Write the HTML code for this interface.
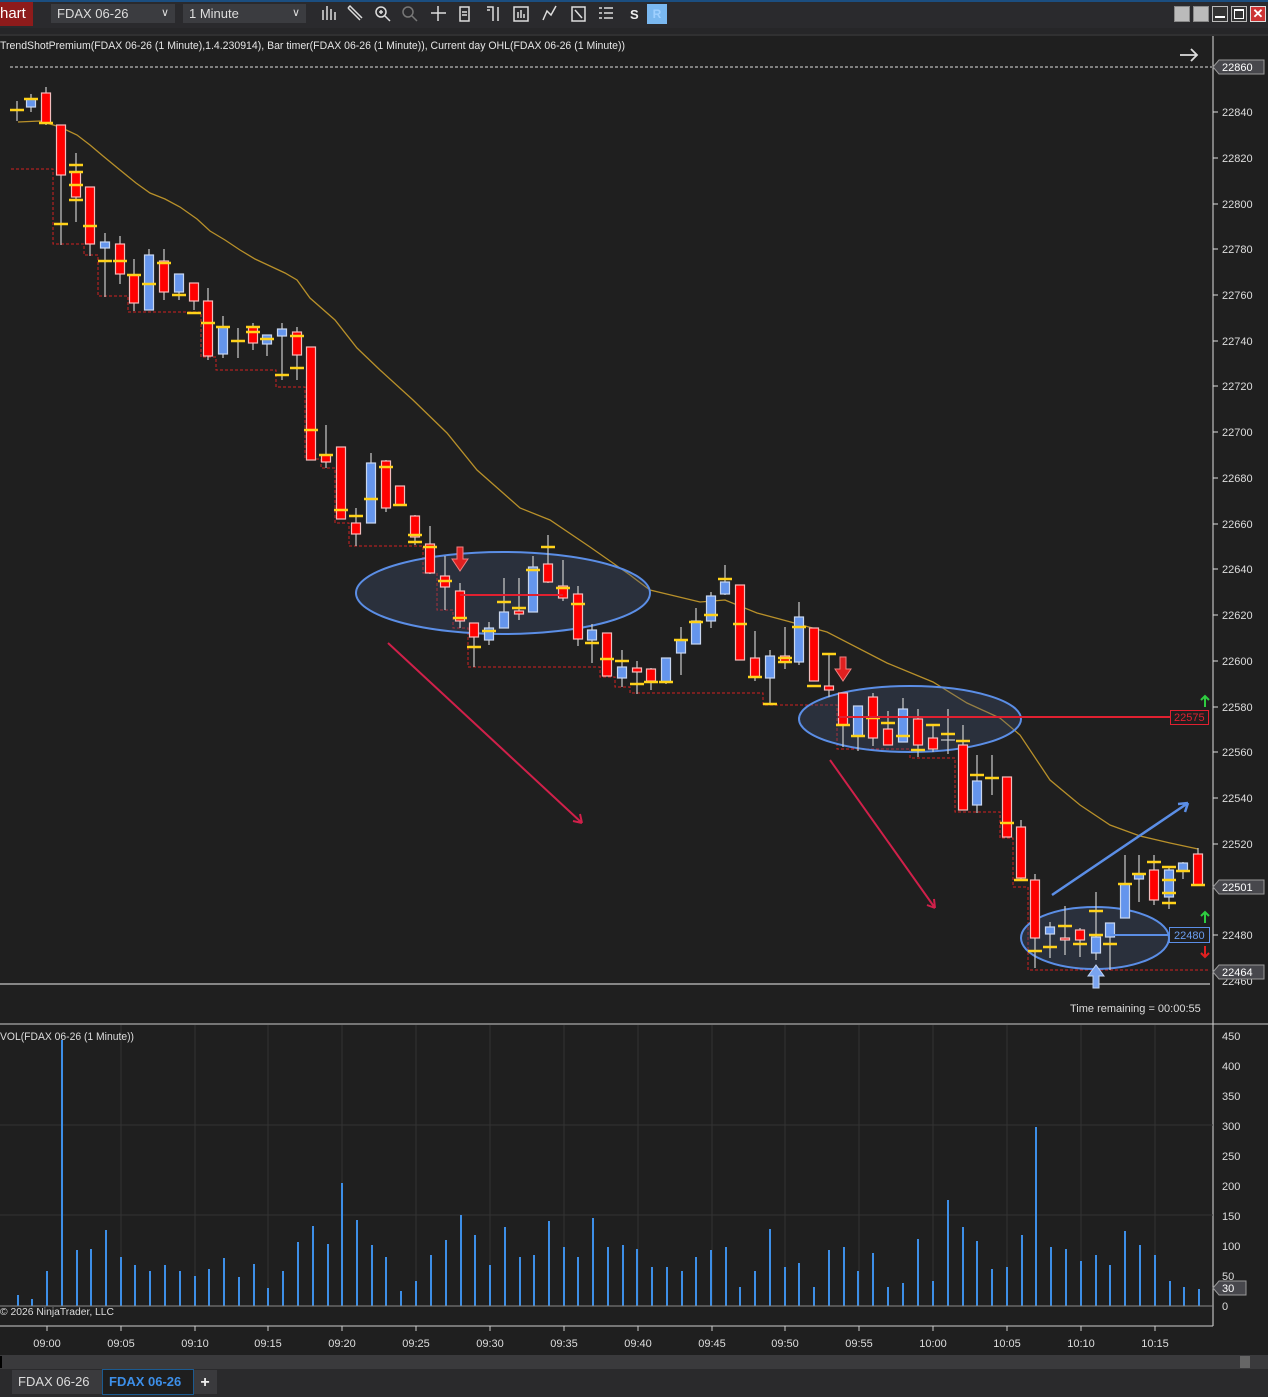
<!DOCTYPE html>
<html><head><meta charset="utf-8"><style>
*{margin:0;padding:0;box-sizing:border-box}
body{width:1268px;height:1397px;background:#1f1f1f;overflow:hidden;font-family:"Liberation Sans",sans-serif;position:relative}
.tb{position:absolute;left:0;top:0;width:1268px;height:28px;background:#2a2a2d;border-top:2px solid #1b4e80}
.abs{position:absolute}
.dd{position:absolute;top:4px;height:19px;background:#3b3c40;color:#ddd;font-size:13px;line-height:19px;padding-left:6px}
.dd span{position:absolute;right:6px;top:0;font-size:11px}
.wb{position:absolute;top:6px;width:16px;height:16px;border:1px solid #888;background:#bbb}
svg text{font-family:"Liberation Sans",sans-serif}
</style></head><body>
<div class="tb"></div>
<div class="abs" style="left:0;top:2px;width:33px;height:24px;background:#8e1b1b;color:#fff;font-size:15px;line-height:24px">hart</div>
<div class="dd" style="left:51px;width:124px">FDAX 06-26<span>&#8744;</span></div>
<div class="dd" style="left:183px;width:123px">1 Minute<span>&#8744;</span></div>
<div class="abs" style="left:630px;top:7px;color:#eee;font-size:13px;font-weight:bold">S</div>
<div class="abs" style="left:647px;top:4px;width:20px;height:20px;background:#7ab8f0;color:#9fd0ff;font-size:12px;text-align:center;line-height:20px;font-weight:bold">R</div>
<div class="wb" style="left:1174px"></div><div class="wb" style="left:1193px"></div>
<div class="wb" style="left:1212px;background:#333;border-color:#bbb"><div style="position:absolute;left:2px;right:2px;bottom:3px;height:2px;background:#fff"></div></div>
<div class="wb" style="left:1231px;background:#333;border-color:#bbb"><div style="position:absolute;left:2px;right:2px;top:2px;bottom:2px;border:1px solid #fff;border-top-width:2px"></div></div>
<div class="wb" style="left:1250px;background:#c33;border-color:#ddd;color:#fff;font-size:13px;line-height:14px;text-align:center;font-weight:bold">✕</div>
<svg class="abs" style="left:0;top:0" width="1268" height="1397">
<g stroke="#ddd" stroke-width="1.5" fill="none">
<path d="M323 10v10M327 6v14M331 9v11M335 12v8"/>
<path d="M348 8l12 12M348 8l2-2 12 12"/>
<circle cx="381" cy="12" r="5"/><path d="M385 16l5 5M379 12h4M381 10v4"/>
<circle cx="408" cy="12" r="5" stroke="#777"/><path d="M412 16l5 5" stroke="#777"/>
<path d="M438 6v15M431 13h15"/>
<path d="M460 7h9v14h-9zM462 12h5M462 15h5"/>
<path d="M487 7h6v14M498 7v14M487 10h3"/>
<path d="M514 7h14v14h-14zM518 12v6M521 10v8M524 14v4"/>
<path d="M543 20l4-9 4 4 5-9"/>
<path d="M572 7h13v14h-13zM575 10l7 8"/>
<path d="M599 8h3M604 8h9M599 13h3M604 13h9M599 18h3M604 18h9"/>
</g>
<rect x="0" y="28" width="1268" height="8" fill="#262628"/>
<line x1="0" y1="35" x2="1268" y2="35" stroke="#3a3a3a"/>
<text x="0" y="49" fill="#e6e6e6" font-size="11" textLength="625" lengthAdjust="spacingAndGlyphs">TrendShotPremium(FDAX 06-26 (1 Minute),1.4.230914), Bar timer(FDAX 06-26 (1 Minute)), Current day OHL(FDAX 06-26 (1 Minute))</text>
<line x1="1213" y1="36" x2="1213" y2="1326" stroke="#ddd"/>
<g fill="#ddd" font-size="11">
<text x="1222" y="116">22840</text><text x="1222" y="162">22820</text><text x="1222" y="208">22800</text><text x="1222" y="253">22780</text><text x="1222" y="299">22760</text><text x="1222" y="345">22740</text><text x="1222" y="390">22720</text><text x="1222" y="436">22700</text><text x="1222" y="482">22680</text><text x="1222" y="528">22660</text><text x="1222" y="573">22640</text><text x="1222" y="619">22620</text><text x="1222" y="665">22600</text><text x="1222" y="711">22580</text><text x="1222" y="756">22560</text><text x="1222" y="802">22540</text><text x="1222" y="848">22520</text><text x="1222" y="939">22480</text><text x="1222" y="985">22460</text>
</g>
<g stroke="#ddd"><path d="M1213 112h5M1213 158h5M1213 204h5M1213 249h5M1213 295h5M1213 341h5M1213 386h5M1213 432h5M1213 478h5M1213 524h5M1213 569h5M1213 615h5M1213 661h5M1213 707h5M1213 752h5M1213 798h5M1213 844h5M1213 935h5"/></g>
<polyline fill="none" stroke="#b8902a" stroke-width="1.3" points="18,122 40,121 60,127 77,135 90,145 103,156 120,170 136,183 150,193 165,199 180,207 197,219 210,231 225,240 240,250 255,259 270,266 285,273 297,280 310,298 335,320 357,348 380,370 413,400 447,433 477,470 520,508 550,520 590,547 630,575 650,590 700,602 725,600 757,613 787,621 827,632 887,663 933,682 967,703 1000,718 1020,735 1050,780 1080,805 1110,825 1140,836 1170,843 1198,849"/>
<polyline fill="none" stroke="#d02020" stroke-width="1" stroke-dasharray="3,2" points="11,169 53,169 53,244 84,244 84,255 98,255 98,296 128,296 128,312 201,312 201,357 216,357 216,370 276,370 276,387 305,387 305,459 321,459 321,468 335,468 335,523 349,523 349,546 423,546 423,573 437,573 437,610 453,610 453,628 468,628 468,667 600,667 600,677 615,677 615,687 630,687 630,693 763,693 763,705 837,705 837,749 910,749 910,758 955,758 955,812 1000,812 1000,838 1013,838 1013,887 1028,887 1028,970 1210,970"/>
<line x1="10" y1="67" x2="1212" y2="67" stroke="#ddd" stroke-dasharray="3,2"/>
<line x1="0" y1="984" x2="1210" y2="984" stroke="#eee"/>
<g fill="rgba(70,90,130,0.3)" stroke="#5b8ee6" stroke-width="2">
<ellipse cx="503" cy="593" rx="147" ry="41"/><ellipse cx="910" cy="719" rx="111" ry="33"/><ellipse cx="1095" cy="938" rx="74" ry="31"/>
</g>
<g stroke-width="1.2">
<g stroke="#ccc">
<path d="M17 101V121M31 94V112M46 87V125M61 125V245M76 153V222M90 187V256M105 233V297M120 236V284M134 259V311M149 249V310M164 249V300M179 274V300M194 283V310M208 288V360M223 316V358M238 328V358M253 323V350M267 335V356M282 323V380M297 327V380M311 347V460M326 425V468M341 447V519M356 508V546M371 453V523M386 460V512M400 486V505M415 515V545M430 526V574M445 556V610M460 583V628M474 623V667M489 622V645M504 578V628M519 578V620M533 556V612M548 535V583M563 560V601M578 586V646M592 624V663M607 633V676M622 650V687M637 661V694M651 668V690M666 658V684M681 627V675M696 608V644M711 592V628M725 565V595M740 585V660M755 631V681M770 650V705M785 627V669M799 602V665M814 628V681M829 653V697M843 693V747M858 706V751M873 693V746M888 711V745M903 698V742M918 709V757M933 725V752M948 709V754M963 725V810M977 755V813M992 755V795M1007 777V837M1021 820V880M1035 874V968M1050 922V958M1065 906V955M1080 928V957M1096 892V960M1110 923V970M1125 855V918M1139 855V902M1154 855V905M1169 866V909M1183 862V879M1198 848V885"/>
</g>
<g fill="#ff0000" stroke="#f3bcbc">
<rect x="41.5" y="93" width="9" height="30"/><rect x="56.5" y="125" width="9" height="50"/><rect x="71.5" y="172" width="9" height="25"/><rect x="85.5" y="187" width="9" height="57"/><rect x="115.5" y="244" width="9" height="30"/><rect x="129.5" y="275" width="9" height="28"/><rect x="159.5" y="261" width="9" height="31"/><rect x="189.5" y="283" width="9" height="18"/><rect x="203.5" y="301" width="9" height="55"/><rect x="248.5" y="327" width="9" height="16"/><rect x="292.5" y="332" width="9" height="23"/><rect x="306.5" y="347" width="9" height="113"/><rect x="321.5" y="455" width="9" height="7"/><rect x="336.5" y="447" width="9" height="72"/><rect x="351.5" y="523" width="9" height="11"/><rect x="381.5" y="461" width="9" height="47"/><rect x="395.5" y="486" width="9" height="19"/><rect x="410.5" y="516" width="9" height="21"/><rect x="425.5" y="544" width="9" height="29"/><rect x="440.5" y="576" width="9" height="11"/><rect x="455.5" y="591" width="9" height="30"/><rect x="469.5" y="623" width="9" height="14"/><rect x="514.5" y="611" width="9" height="3"/><rect x="543.5" y="564" width="9" height="18"/><rect x="558.5" y="586" width="9" height="12"/><rect x="573.5" y="594" width="9" height="45"/><rect x="602.5" y="633" width="9" height="43"/><rect x="632.5" y="668" width="9" height="4"/><rect x="646.5" y="669" width="9" height="12"/><rect x="735.5" y="585" width="9" height="75"/><rect x="750.5" y="658" width="9" height="19"/><rect x="780.5" y="656" width="9" height="6"/><rect x="809.5" y="628" width="9" height="53"/><rect x="824.5" y="686" width="9" height="4"/><rect x="838.5" y="693" width="9" height="32"/><rect x="868.5" y="697" width="9" height="41"/><rect x="883.5" y="729" width="9" height="16"/><rect x="913.5" y="719" width="9" height="26"/><rect x="928.5" y="738" width="9" height="11"/><rect x="958.5" y="745" width="9" height="65"/><rect x="1002.5" y="777" width="9" height="60"/><rect x="1016.5" y="827" width="9" height="51"/><rect x="1030.5" y="880" width="9" height="58"/><rect x="1060.5" y="938" width="9" height="2"/><rect x="1075.5" y="930" width="9" height="10"/><rect x="1149.5" y="870" width="9" height="30"/><rect x="1193.5" y="854" width="9" height="31"/>
</g>
<g fill="#6495ed" stroke="#c8d6ef">
<rect x="26.5" y="99" width="9" height="8"/><rect x="100.5" y="242" width="9" height="6"/><rect x="144.5" y="255" width="9" height="55"/><rect x="174.5" y="274" width="9" height="18"/><rect x="218.5" y="327" width="9" height="27"/><rect x="262.5" y="335" width="9" height="9"/><rect x="277.5" y="329" width="9" height="7"/><rect x="366.5" y="463" width="9" height="60"/><rect x="484.5" y="628" width="9" height="12"/><rect x="499.5" y="612" width="9" height="16"/><rect x="528.5" y="567" width="9" height="45"/><rect x="587.5" y="630" width="9" height="10"/><rect x="617.5" y="667" width="9" height="11"/><rect x="661.5" y="658" width="9" height="24"/><rect x="676.5" y="640" width="9" height="13"/><rect x="691.5" y="621" width="9" height="23"/><rect x="706.5" y="596" width="9" height="25"/><rect x="720.5" y="582" width="9" height="12"/><rect x="765.5" y="656" width="9" height="22"/><rect x="794.5" y="617" width="9" height="45"/><rect x="853.5" y="706" width="9" height="30"/><rect x="898.5" y="709" width="9" height="33"/><rect x="972.5" y="781" width="9" height="24"/><rect x="1045.5" y="927" width="9" height="7"/><rect x="1091.5" y="937" width="9" height="16"/><rect x="1105.5" y="923" width="9" height="14"/><rect x="1120.5" y="884" width="9" height="34"/><rect x="1134.5" y="874" width="9" height="5"/><rect x="1164.5" y="870" width="9" height="27"/><rect x="1178.5" y="863" width="9" height="8"/>
</g>
<g stroke="#ffd21a" stroke-width="2.5">
<path d="M10 110h14M24 99h14M39 123h14M54 224h14M69 165h14M69 172h14M69 185h14M69 200h14M83 226h14M98 261h14M113 261h14M127 275h14M142 284h14M157 263h14M172 295h14M187 313h14M201 323h14M216 327h14M231 341h14M246 327h14M246 332h14M260 339h14M275 375h14M290 336h14M290 368h14M304 430h14M319 455h14M334 510h14M349 516h14M364 499h14M379 467h14M393 505h14M408 535h14M408 542h14M423 547h14M438 581h14M453 618h14M467 647h14M482 631h14M497 602h14M512 608h14M526 570h14M541 547h14M556 588h14M571 604h14M585 643h14M600 659h14M615 661h14M630 684h14M644 682h14M659 682h14M674 640h14M689 622h14M704 615h14M718 579h14M733 624h14M748 677h14M763 704h14M778 658h14M778 662h14M792 627h14M807 686h14M822 654h14M836 725h14M851 736h14M866 718h14M881 723h14M896 736h14M911 750h14M926 725h14M941 734h14M956 741h14M970 775h14M985 778h14M1000 823h14M1014 880h14M1028 951h14M1043 947h14M1058 926h14M1073 944h14M1089 911h14M1089 935h14M1103 944h14M1118 884h14M1132 874h14M1147 862h14M1162 867h14M1162 880h14M1162 893h14M1162 903h14M1176 871h14M1191 885h14"/>
</g>
<path d="M941 740h14" stroke="#ccc"/>
</g>
<line x1="460" y1="595" x2="563" y2="595" stroke="#e02030" stroke-width="2"/>
<line x1="838" y1="717" x2="1170" y2="717" stroke="#e02030" stroke-width="2"/>
<rect x="1170.5" y="710.5" width="38" height="14" fill="#1f1f1f" stroke="#e02030"/>
<text x="1174" y="721" fill="#e02030" font-size="11">22575</text>
<line x1="1110" y1="935" x2="1170" y2="935" stroke="#5b8ee6" stroke-width="2"/>
<rect x="1169.5" y="927.5" width="40" height="15" fill="#1f1f1f" stroke="#5b8ee6"/>
<text x="1174" y="939" fill="#6b9ef0" font-size="11">22480</text>
<g stroke="#d0204a" stroke-width="2" fill="none"><path d="M388 643L582 823M582 823l-9-2M582 823l-2-9"/><path d="M830 760L935 908M935 908l-8-3M935 908l-1-9"/></g>
<g stroke="#5b8ee6" stroke-width="2.5" fill="none"><path d="M1052 895L1188 803M1188 803l-10 1M1188 803l-3 9"/></g>
<path d="M457 547h6v12h5l-8 12-8-12h5z" fill="#e02020" stroke="#f08080"/>
<path d="M840 657h6v12h5l-8 12-8-12h5z" fill="#e02020" stroke="#f08080"/>
<path d="M1093 988h6v-12h5l-8-11-8 11h5z" fill="#7aa4f0" stroke="#c0d4f5"/>
<g stroke-width="2" fill="none"><path d="M1205 707v-11M1201 700l4-4 4 4" stroke="#2ecc40"/><path d="M1205 923v-11M1201 916l4-4 4 4" stroke="#2ecc40"/><path d="M1205 946v11M1201 953l4 4 4-4" stroke="#e02020"/></g>
<path d="M1180 55h17M1191 49l6 6-6 6" stroke="#ddd" stroke-width="1.8" fill="none"/>
<g fill="#47474c" stroke="#999"><path d="M1213 67l6-7h45v14h-45z"/><path d="M1213 887l6-7h45v14h-45z"/><path d="M1213 972l6-7h45v14h-45z"/></g>
<g fill="#fff" font-size="11"><text x="1222" y="71">22860</text><text x="1222" y="891">22501</text><text x="1222" y="976">22464</text></g>
<text x="1070" y="1012" fill="#ddd" font-size="11">Time remaining = 00:00:55</text>
<line x1="0" y1="1024" x2="1268" y2="1024" stroke="#ccc"/>
<g stroke="#333"><path d="M0 1125H1213M0 1215H1213M121 1025V1306M195 1025V1306M268 1025V1306M342 1025V1306M416 1025V1306M490 1025V1306M564 1025V1306M638 1025V1306M712 1025V1306M785 1025V1306M859 1025V1306M933 1025V1306M1007 1025V1306M1081 1025V1306M1155 1025V1306"/></g>
<text x="0" y="1040" fill="#ddd" font-size="11" textLength="134" lengthAdjust="spacingAndGlyphs">VOL(FDAX 06-26 (1 Minute))</text>
<g stroke="#3d8fe8" stroke-width="2"><path d="M18 1306V1295M32 1306V1299M47 1306V1271M62 1306V1040M77 1306V1250M91 1306V1249M106 1306V1230M121 1306V1257M135 1306V1265M150 1306V1271M165 1306V1265M180 1306V1271M195 1306V1276M209 1306V1269M224 1306V1258M239 1306V1277M254 1306V1264M268 1306V1288M283 1306V1271M298 1306V1242M313 1306V1226M328 1306V1244M342 1306V1183M357 1306V1220M372 1306V1245M386 1306V1257M401 1306V1291M416 1306V1281M431 1306V1255M446 1306V1240M461 1306V1215M475 1306V1235M490 1306V1265M505 1306V1227M520 1306V1257M534 1306V1255M549 1306V1221M564 1306V1247M578 1306V1257M593 1306V1218M608 1306V1247M623 1306V1245M637 1306V1249M652 1306V1267M667 1306V1267M682 1306V1271M696 1306V1257M711 1306V1250M726 1306V1247M740 1306V1287M755 1306V1271M770 1306V1229M785 1306V1267M799 1306V1263M814 1306V1287M829 1306V1250M844 1306V1247M858 1306V1271M873 1306V1253M888 1306V1287M903 1306V1283M918 1306V1239M933 1306V1281M948 1306V1200M963 1306V1227M977 1306V1241M992 1306V1269M1007 1306V1267M1022 1306V1235M1036 1306V1127M1051 1306V1247M1066 1306V1249M1081 1306V1261M1096 1306V1255M1110 1306V1265M1125 1306V1231M1140 1306V1245M1155 1306V1255M1170 1306V1281M1184 1306V1287M1199 1306V1289"/></g>
<line x1="0" y1="1306" x2="1213" y2="1306" stroke="#888"/>
<g fill="#ddd" font-size="11"><text x="1222" y="1040">450</text><text x="1222" y="1070">400</text><text x="1222" y="1100">350</text><text x="1222" y="1130">300</text><text x="1222" y="1160">250</text><text x="1222" y="1190">200</text><text x="1222" y="1220">150</text><text x="1222" y="1250">100</text><text x="1222" y="1280">50</text><text x="1222" y="1310">0</text></g>
<path d="M1213 1288l6-7h27v14h-27z" fill="#47474c" stroke="#999"/><text x="1222" y="1292" fill="#fff" font-size="11">30</text>
<text x="0" y="1315" fill="#ddd" font-size="10" textLength="114" lengthAdjust="spacingAndGlyphs">© 2026 NinjaTrader, LLC</text>
<line x1="0" y1="1326" x2="1213" y2="1326" stroke="#ccc"/>
<g stroke="#ccc"><path d="M47 1326v5M121 1326v5M195 1326v5M268 1326v5M342 1326v5M416 1326v5M490 1326v5M564 1326v5M638 1326v5M712 1326v5M785 1326v5M859 1326v5M933 1326v5M1007 1326v5M1081 1326v5M1155 1326v5"/></g>
<g fill="#ddd" font-size="11" text-anchor="middle"><text x="47" y="1347">09:00</text><text x="121" y="1347">09:05</text><text x="195" y="1347">09:10</text><text x="268" y="1347">09:15</text><text x="342" y="1347">09:20</text><text x="416" y="1347">09:25</text><text x="490" y="1347">09:30</text><text x="564" y="1347">09:35</text><text x="638" y="1347">09:40</text><text x="712" y="1347">09:45</text><text x="785" y="1347">09:50</text><text x="859" y="1347">09:55</text><text x="933" y="1347">10:00</text><text x="1007" y="1347">10:05</text><text x="1081" y="1347">10:10</text><text x="1155" y="1347">10:15</text></g>
<rect x="0" y="1355" width="1268" height="14" fill="#3a3a3c"/>
<rect x="0" y="1356" width="2" height="12" fill="#000"/>
<rect x="1240" y="1356" width="10" height="12" fill="#666"/>
<rect x="0" y="1369" width="1268" height="28" fill="#2a2a2c"/>
<rect x="12" y="1370" width="90" height="24" fill="#3a3a3d"/>
<rect x="102.5" y="1369.5" width="91" height="25" fill="#1e1e1e" stroke="#1b5a90"/>
<rect x="194" y="1370" width="23" height="24" fill="#3a3a3d"/>
<text x="18" y="1386" fill="#ddd" font-size="13">FDAX 06-26</text>
<text x="109" y="1386" fill="#3d8fe8" font-size="13" font-weight="bold">FDAX 06-26</text>
<text x="205" y="1387" fill="#eee" font-size="16" text-anchor="middle" font-weight="bold">+</text>
</svg>
</body></html>
